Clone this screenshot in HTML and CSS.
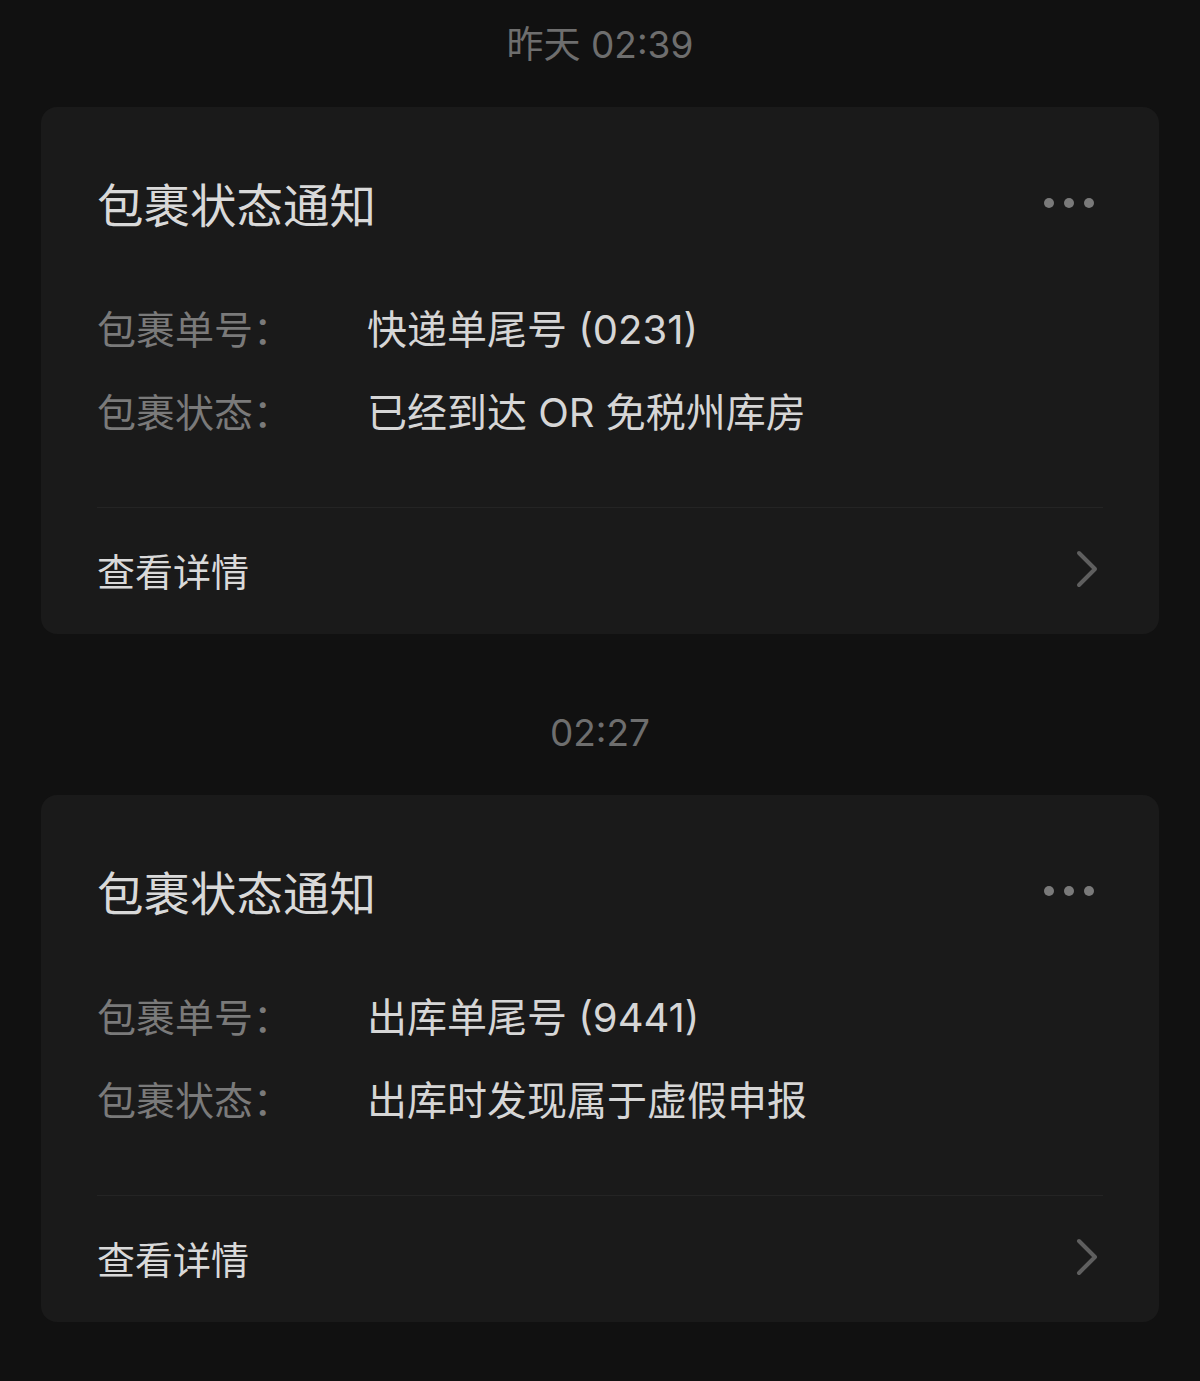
FILE: index.html
```html
<!DOCTYPE html>
<html lang="zh-CN">
<head>
<meta charset="utf-8">
<link rel="stylesheet" href="styles.css">
</head>
<body>
<div class="feed">
  <div class="time">昨天 02:39</div>
  <div class="card">
    <div class="head">
      <div class="title">包裹状态通知</div>
      <div class="more"><span></span><span></span><span></span></div>
    </div>
    <div class="rows">
      <div class="row"><div class="label">包裹单号：</div><div class="value">快递单尾号 (0231)</div></div>
      <div class="row"><div class="label">包裹状态：</div><div class="value">已经到达 OR 免税州库房</div></div>
    </div>
    <div class="foot">
      <div class="link">查看详情</div>
      <svg class="chev" width="24" height="40" viewBox="0 0 24 40"><path d="M4 4 L20 20 L4 36" fill="none" stroke="#5f5f5f" stroke-width="4" stroke-linecap="round" stroke-linejoin="round"/></svg>
    </div>
  </div>
  <div class="time">02:27</div>
  <div class="card">
    <div class="head">
      <div class="title">包裹状态通知</div>
      <div class="more"><span></span><span></span><span></span></div>
    </div>
    <div class="rows">
      <div class="row"><div class="label">包裹单号：</div><div class="value">出库单尾号 (9441)</div></div>
      <div class="row"><div class="label">包裹状态：</div><div class="value">出库时发现属于虚假申报</div></div>
    </div>
    <div class="foot">
      <div class="link">查看详情</div>
      <svg class="chev" width="24" height="40" viewBox="0 0 24 40"><path d="M4 4 L20 20 L4 36" fill="none" stroke="#5f5f5f" stroke-width="4" stroke-linecap="round" stroke-linejoin="round"/></svg>
    </div>
  </div>
</div>
</body>
</html>
```

FILE: styles.css
```css
html, body {
  margin: 0;
  padding: 0;
  background: #111111;
}
body {
  font-family: "Inter", "Noto Sans CJK SC", "Noto Sans", sans-serif;
  -webkit-font-smoothing: antialiased;
}
.feed {
  padding: 15px 41px 40px;
}
.time {
  height: 60px;
  line-height: 60px;
  text-align: center;
  font-size: 37px;
  color: #6e6e6e;
  margin-bottom: 32px;
}
.card {
  background: #1a1a1a;
  border-radius: 16px;
  padding: 69px 56px 0;
  margin-bottom: 69px;
}
.head {
  display: flex;
  align-items: center;
  justify-content: space-between;
  height: 60px;
}
.title {
  font-size: 46.5px;
  line-height: 60px;
  color: #d9d9d9;
}
.more {
  display: flex;
  gap: 10px;
  margin-right: 9px;
  margin-top: -6px;
}
.more span {
  width: 10px;
  height: 10px;
  border-radius: 50%;
  background: #7a7a7a;
}
.rows {
  margin-top: 52px;
}
.row {
  display: flex;
  height: 83px;
  line-height: 83px;
}
.label {
  width: 270px;
  font-size: 39px;
  color: #7a7a7a;
}
.value {
  font-size: 40px;
  color: #d6d6d6;
}
.foot {
  margin-top: 53px;
  border-top: 1px solid #242424;
  box-sizing: border-box;
  height: 127px;
  padding-bottom: 4px;
  display: flex;
  align-items: center;
  justify-content: space-between;
}
.link {
  font-size: 38px;
  color: #d9d9d9;
}
.chev {
  margin-right: 4px;
}
```
